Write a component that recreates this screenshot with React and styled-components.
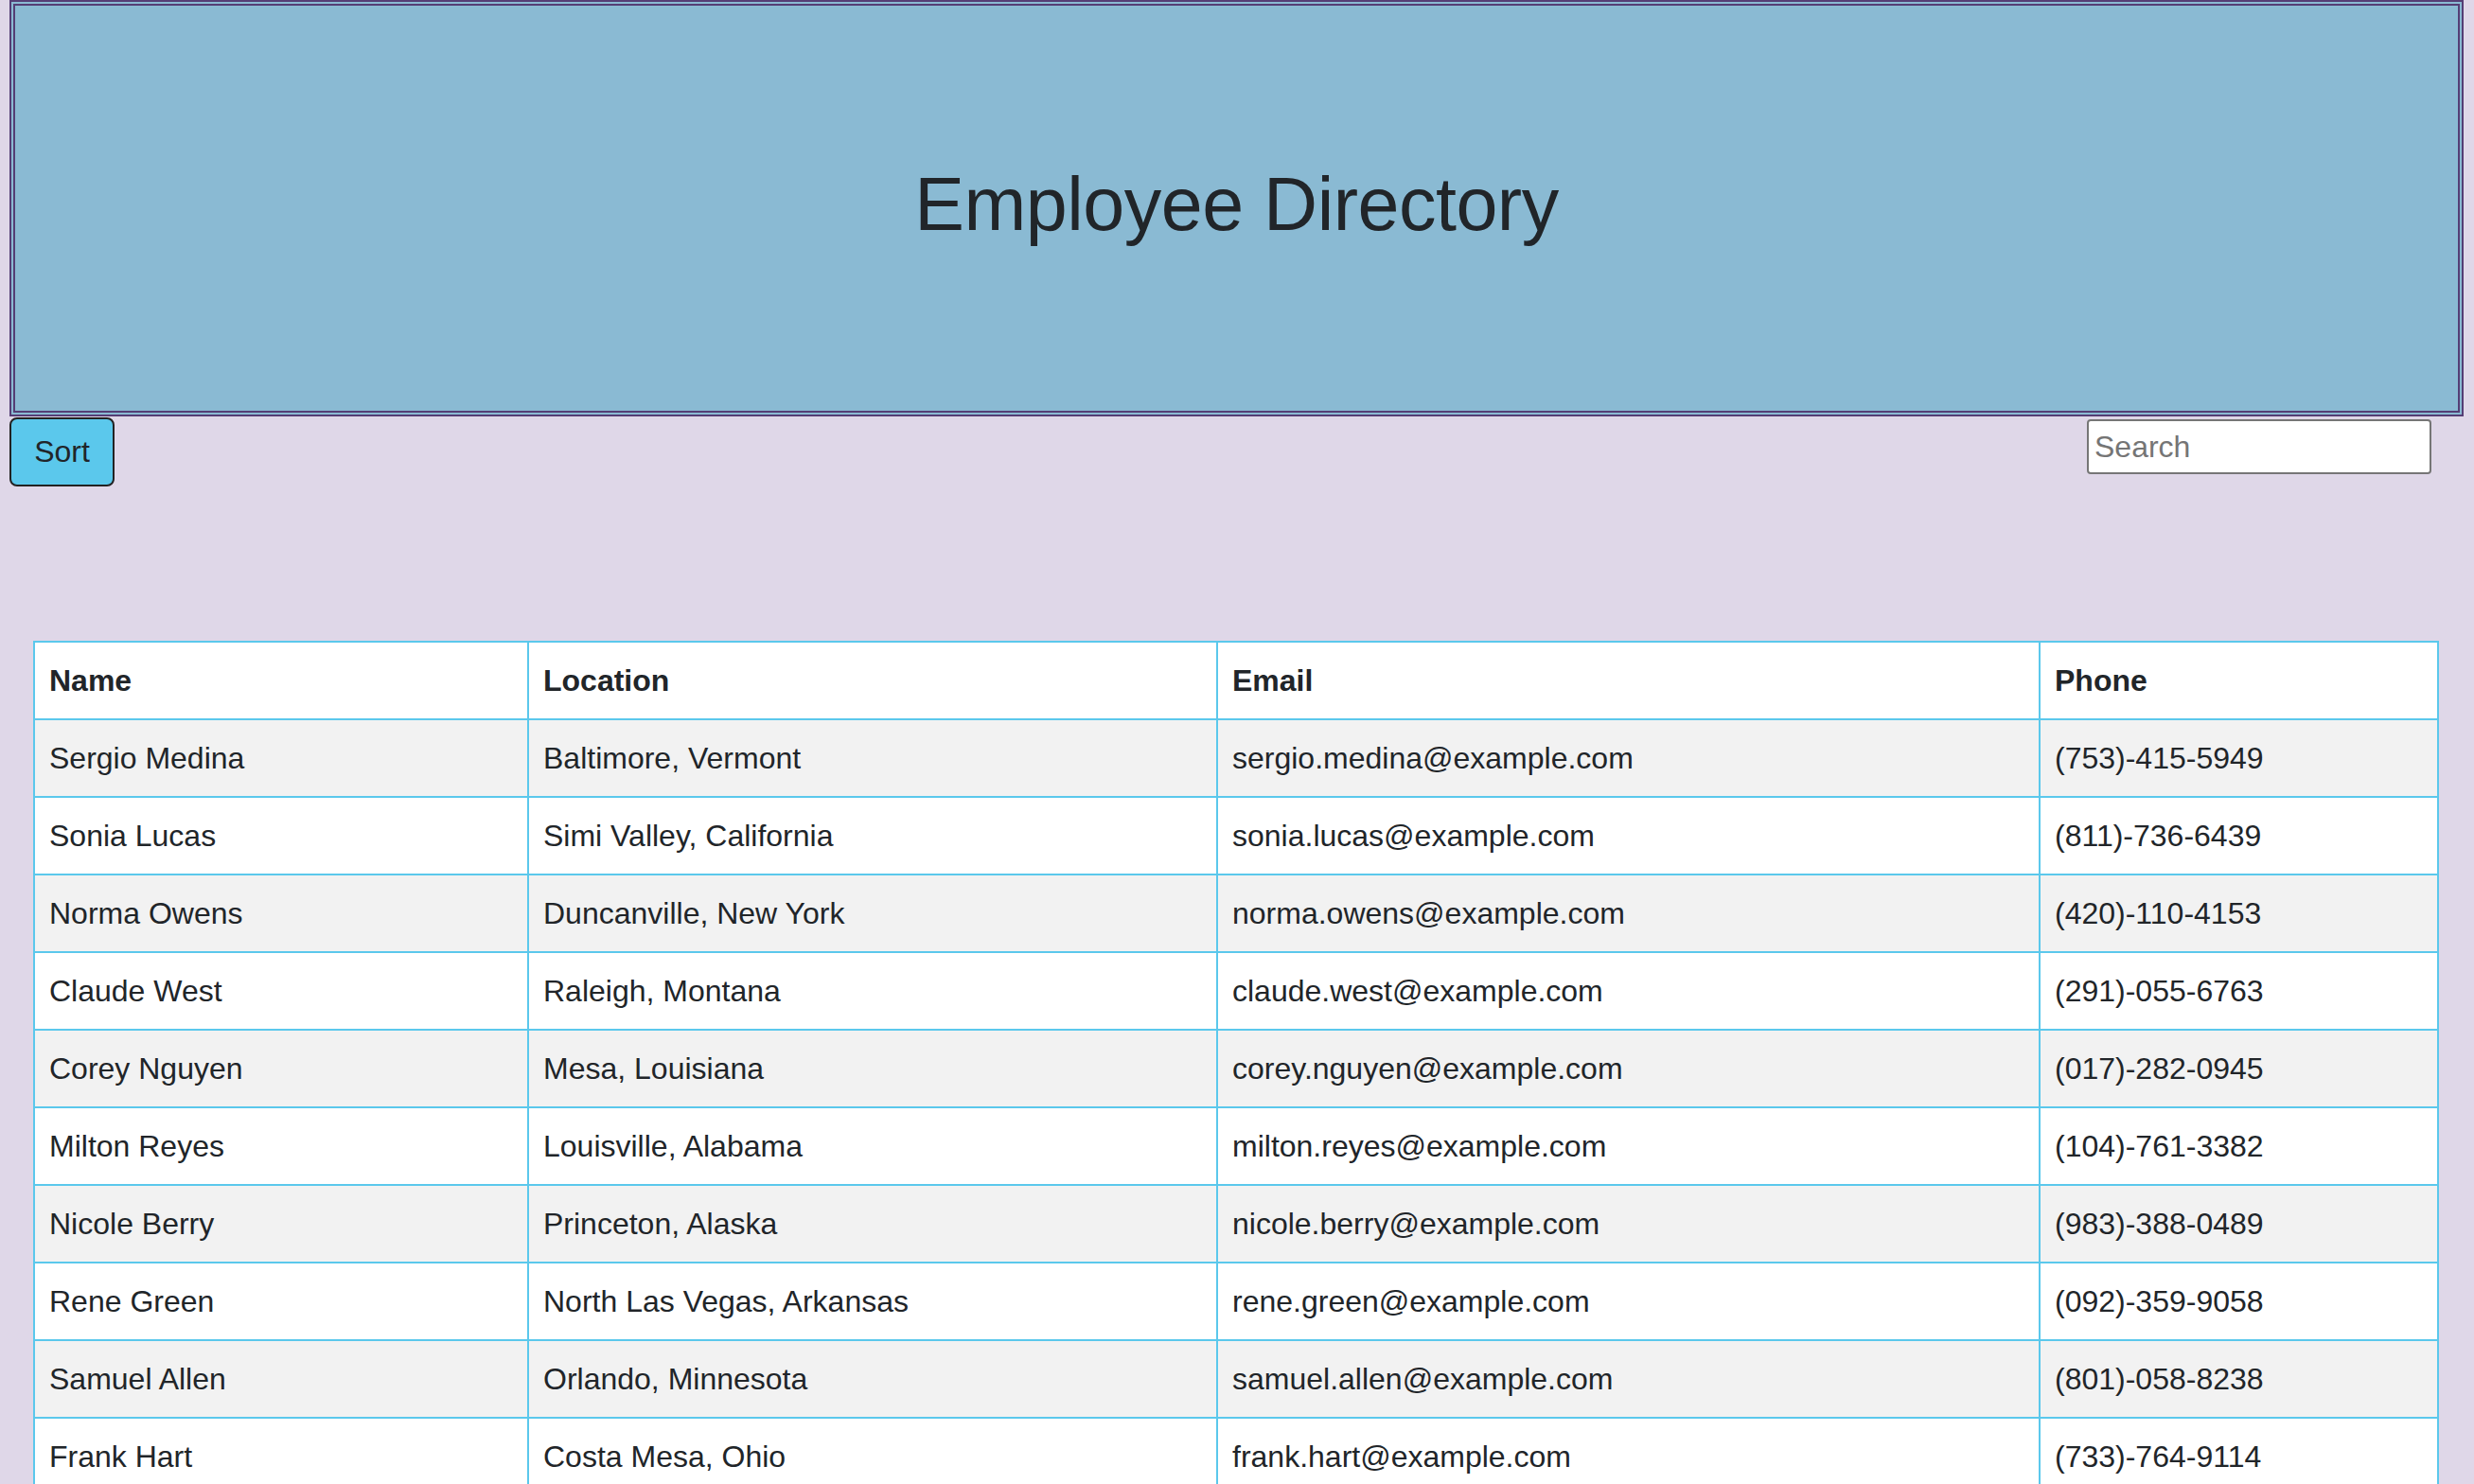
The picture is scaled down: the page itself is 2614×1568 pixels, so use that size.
import React, { useState } from 'react';
import styled, { createGlobalStyle } from 'styled-components';

const GlobalStyle = createGlobalStyle`
  body {
    margin: 0;
    background: #dfd7e8;
    font-family: "Liberation Sans", Arial, sans-serif;
    color: #212529;
  }
`

const Header = styled.header`
  margin: 0 11px 0 10px;
  height: 440px;
  box-sizing: border-box;
  border: 6px double #553e75;
  background: #8abad3;
  display: flex;
  align-items: center;
  justify-content: center;
  h1 {
    margin: 0 0 8px;
    font-size: 79px;
    font-weight: 400;
    letter-spacing: -0.5px;
    color: #212529;
  }
`

const Toolbar = styled.div`
  display: flex;
  justify-content: space-between;
  align-items: flex-start;
  padding: 1px 45px 0 10px;
`

const SortButton = styled.button`
  width: 111px;
  height: 73px;
  background: #5bc8ec;
  border: 2px solid #222;
  border-radius: 8px;
  font-family: inherit;
  font-size: 32px;
  color: #212529;
  cursor: pointer;
  padding: 0;
`

const SearchInput = styled.input`
  margin-top: 2px;
  width: 364px;
  height: 58px;
  box-sizing: border-box;
  border: 2px solid #767676;
  border-radius: 4px;
  padding: 0 6px;
  font-family: inherit;
  font-size: 32px;
  background: #fff;
  &::placeholder {
    color: #757575;
  }
`

const TableWrap = styled.div`
  padding: 163px 37px 0 35px;
`

const Table = styled.table`
  width: 100%;
  border-collapse: collapse;
  background: #fff;
  font-size: 32px;
  th, td {
    border: 2px solid #5bc8ec;
    text-align: left;
    padding: 0 15px;
    height: 82px;
    box-sizing: border-box;
    line-height: 36px;
  }
  th {
    font-weight: 700;
  }
  tbody tr:nth-child(odd) {
    background: #f2f2f2;
  }
`

const employees = [
  ['Sergio Medina', 'Baltimore, Vermont', 'sergio.medina@example.com', '(753)-415-5949'],
  ['Sonia Lucas', 'Simi Valley, California', 'sonia.lucas@example.com', '(811)-736-6439'],
  ['Norma Owens', 'Duncanville, New York', 'norma.owens@example.com', '(420)-110-4153'],
  ['Claude West', 'Raleigh, Montana', 'claude.west@example.com', '(291)-055-6763'],
  ['Corey Nguyen', 'Mesa, Louisiana', 'corey.nguyen@example.com', '(017)-282-0945'],
  ['Milton Reyes', 'Louisville, Alabama', 'milton.reyes@example.com', '(104)-761-3382'],
  ['Nicole Berry', 'Princeton, Alaska', 'nicole.berry@example.com', '(983)-388-0489'],
  ['Rene Green', 'North Las Vegas, Arkansas', 'rene.green@example.com', '(092)-359-9058'],
  ['Samuel Allen', 'Orlando, Minnesota', 'samuel.allen@example.com', '(801)-058-8238'],
  ['Frank Hart', 'Costa Mesa, Ohio', 'frank.hart@example.com', '(733)-764-9114'],
]

const App = () => {
  const [search, setSearch] = useState('')

  return (
    <>
      <GlobalStyle />
      <Header>
        <h1>Employee Directory</h1>
      </Header>
      <Toolbar>
        <SortButton>Sort</SortButton>
        <SearchInput placeholder="Search" value={search} onChange={e => setSearch(e.target.value)} />
      </Toolbar>
      <TableWrap>
        <Table>
          <thead>
            <tr>
              <th style={{ width: 522 }}>Name</th>
              <th style={{ width: 728 }}>Location</th>
              <th style={{ width: 869 }}>Email</th>
              <th>Phone</th>
            </tr>
          </thead>
          <tbody>
            {employees
              .filter(emp => emp[0].toLowerCase().includes(search.toLowerCase()))
              .map(emp => (
                <tr key={emp[2]}>
                  {emp.map(cell => <td key={cell}>{cell}</td>)}
                </tr>
              ))}
          </tbody>
        </Table>
      </TableWrap>
    </>
  )
}

export default App
